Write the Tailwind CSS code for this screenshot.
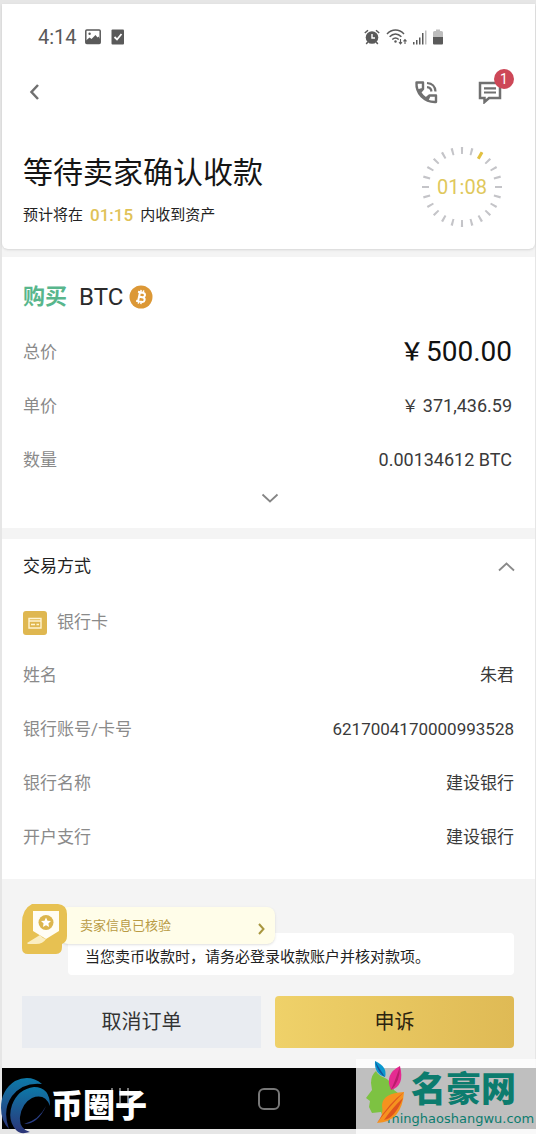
<!DOCTYPE html>
<html lang="zh-CN">

<head>
    <meta charset="UTF-8" />
    <meta name="viewport" content="width=device-width, initial-scale=1.0" />
    <title>等待卖家确认收款</title>
    <script src="https://cdn.jsdelivr.net/npm/@tailwindcss/browser@4"></script>
</head>

<body class="bg-[#e6e6e6] pt-1 pl-0.5 pr-px font-[Roboto,'Noto_Sans_CJK_SC',sans-serif] text-[#3a3a3a]">

    <main class="bg-[#f4f4f4]">
        <!-- Header -->
        <header class="bg-white rounded-b-md shadow-sm pb-5">
            <div class="flex items-center justify-between pt-5 pl-9 pr-[91px] h-[46px] text-[#5a5a5a]">
                <div class="flex items-center gap-2">
                    <span class="text-xl">4:14</span>
                    <svg class="w-4 h-4" viewBox="0 0 16 16" fill="none">
                        <rect x="0.8" y="1" width="14.4" height="13.5" rx="1" stroke="currentColor" stroke-width="1.5" />
                        <circle cx="4.6" cy="4.8" r="1.2" fill="currentColor" />
                        <path d="M1 11.5 4.5 8.5 6.5 10 10.5 6 12.5 8.500 13.5 7.500 15 10v4.500H1z" fill="currentColor" />
                    </svg>
                    <svg class="w-4 h-4 ml-0.5" viewBox="0 0 16 16" fill="none">
                        <rect x="0.5" y="0.500" width="12.500" height="15" rx="1" fill="currentColor" />
                        <path d="M3.500 8 6 10.500 10.500 5" stroke="#fff" stroke-width="1.800" />
                    </svg>
                </div>
                <div class="flex items-center gap-1">
                    <svg class="w-4 h-4" viewBox="0 0 16 16" fill="none" stroke="currentColor">
                        <circle cx="8" cy="8.500" r="6.300" fill="currentColor" stroke="none" />
                        <path d="M8 5v4h3" stroke="#fff" stroke-width="1.400" />
                        <path d="M.8 4 4 1.200M15.200 4 12 1.200M3.800 13 2.200 15M12.200 13l1.600 2" stroke-width="1.500" />
                    </svg>
                    <svg class="w-[22px] h-4 ml-0.5" viewBox="0 0 22 16" fill="none" stroke="currentColor" stroke-width="1.500">
                        <path d="M1 5C6-.2 13-.2 18 5M3.600 7.800c3.600-3.600 8.200-3.600 11.800 0M6.300 10.500c2-2 4.400-2 6.400 0" />
                        <circle cx="9.500" cy="12.500" r="1.200" fill="currentColor" stroke="none" />
                        <path d="M14.500 10v5M13 13.200l1.500 1.800 1.500-1.800M19 15v-4.500M17.500 12.300 19 10.500l1.500 1.800" stroke-width="1.100" />
                    </svg>
                    <svg class="w-4 h-4" viewBox="0 0 16 16" fill="currentColor">
                        <path d="M1 13h1.500v2.500H1zM4 11h1.500v4.500H4zM7 8.500h1.500v7H7zM10 4h1.500v11.500H10z" />
                        <path d="M13 1.500h1.500v14H13z" opacity=".4" />
                    </svg>
                    <svg class="w-3 h-4" viewBox="0 0 12 16" fill="currentColor">
                        <path d="M1 8V3.500Q1 2 2.500 2H4V.5h4V2h1.500Q11 2 11 3.500V8z" opacity=".4" />
                        <path d="M1 8h10v6.500q0 1-1 1H2q-1 0-1-1z" />
                    </svg>
                </div>
            </div>

            <nav class="flex items-center justify-between pl-[26px] pr-[33px] mt-6 h-9 text-[#707070]">
                <button type="button" aria-label="返回">
                    <svg class="w-4 h-4" viewBox="0 0 16 16" fill="none" stroke="currentColor" stroke-width="2.500">
                        <path d="M10 1 3.500 8 10 15" />
                    </svg>
                </button>
                <div class="flex gap-10">
                    <button type="button" aria-label="电话">
                        <svg class="w-6 h-6" viewBox="0 0 24 24" fill="none" stroke="currentColor" stroke-width="2.400" stroke-linejoin="round">
                            <path d="M2.500 2.500H9V9L6 12.500Q8.500 16.500 12 18.500L15.500 15.500H22V22Q13.500 22.500 7.500 16.500 2 10.500 2.500 2.500zM9 9 4.500 10.500M15.500 15.500 13.500 20" />
                            <path d="M13 3q8 .5 8.500 8.500M13 7.200q4 .3 4.500 4.300" stroke-width="2.200" />
                        </svg>
                    </button>
                    <button type="button" aria-label="消息" class="relative">
                        <svg class="w-6 h-6" viewBox="0 0 24 24" fill="none" stroke="currentColor" stroke-width="2.500">
                            <path d="M2 3h20v15H11L6.500 22v-4H2z" />
                            <path d="M6 8.300h12M6 12.500h12" stroke-width="2.200" />
                        </svg>
                        <span class="absolute -top-[11px] -right-3 w-5 h-5 rounded-full bg-[#cd4757] text-white text-sm leading-5">1</span>
                    </button>
                </div>
            </nav>

            <div class="flex items-center justify-between pl-[21px] pr-[31px] mt-[35px]">
                <div>
                    <h1 class="text-[30px] leading-10 mt-2 text-[#151515]">等待卖家确认收款</h1>
                    <p class="flex items-center gap-[7px] mt-2 text-[15px] leading-7 text-[#222]">
                        预计将在 <span class="text-[17px] font-medium leading-7 text-[#e0c257]">01:15</span> 内收到资产
                    </p>
                </div>
                <div class="relative w-[84px] h-[84px] flex items-center justify-center">
                    <svg class="absolute inset-0" viewBox="0 0 84 84" fill="none" stroke-width="7">
                        <circle cx="42" cy="42" r="36.500" stroke="#c4c4c8" pathLength="240" stroke-dasharray="2.200 7.800" stroke-dashoffset="1.100" />
                        <path d="M42 2v7.500" stroke="#e3c13f" stroke-width="3" transform="rotate(30 42 42)" />
                    </svg>
                    <span class="text-xl text-[#dfc85c]">01:08</span>
                </div>
            </div>
        </header>

        <!-- Order -->
        <section class="bg-white mt-2 pt-5 pl-[21px] pr-[19px]">
            <h2 class="flex items-center h-10 text-2xl text-[#2b2b2b]">
                <span class="text-[22px] font-bold text-[#58b68c]">购买</span>
                <span class="ml-3">BTC</span>
                <svg class="w-6 h-6 ml-1.5" viewBox="0 0 24 24">
                    <circle cx="12" cy="12" r="11.500" fill="#dc9836" />
                    <g transform="rotate(12 12 12)" fill="none" stroke="#fff" stroke-width="2">
                        <path d="M8 7.500h4.800q2.700 0 2.700 2.200T12.800 12H10M10 12h3.300q2.900 0 2.900 2.300t-2.900 2.300H8M10 7.500v9" />
                        <path d="M10.700 5v2M13.300 5v2M10.700 17v2M13.300 17v2" stroke-width="1.500" />
                    </g>
                </svg>
            </h2>
            <dl class="text-lg pr-1">
                <div class="flex items-center justify-between h-[54px] mt-2">
                    <dt class="text-[17px] text-[#8a8a8a]">总价</dt>
                    <dd class="flex items-center gap-0.5 text-[28px] text-[#111]"><span class="text-2xl font-medium">￥</span>500.00</dd>
                </div>
                <div class="flex items-center justify-between h-[54px]">
                    <dt class="text-[17px] text-[#8a8a8a]">单价</dt>
                    <dd class="flex items-center gap-1"><span class="text-[17px]">￥</span>371,436.59</dd>
                </div>
                <div class="flex items-center justify-between h-[54px]">
                    <dt class="text-[17px] text-[#8a8a8a]">数量</dt>
                    <dd>0.00134612 BTC</dd>
                </div>
            </dl>
            <button type="button" aria-label="展开" class="flex justify-center w-full pt-0.5 pb-[21px]">
                <svg class="w-[18px] h-[18px]" viewBox="0 0 18 18" fill="none" stroke="#858585" stroke-width="1.800">
                    <path d="M1.500 5.500 9 12.500 16.500 5.500" />
                </svg>
            </button>
        </section>

        <!-- Payment method -->
        <section class="bg-white mt-[11px] pl-[21px] pr-[19px] pb-3.5 text-[17px]">
            <div class="flex items-center justify-between h-14">
                <h2 class="text-[#222]">交易方式</h2>
                <button type="button" aria-label="收起">
                    <svg class="w-[18px] h-[18px]" viewBox="0 0 18 18" fill="none" stroke="#8a8a8a" stroke-width="1.800">
                        <path d="M1 12.500 8.500 5.500 16 12.500" />
                    </svg>
                </button>
            </div>
            <div class="flex items-center gap-2.5 h-[54px] pt-0.5 text-[#8a8a8a]">
                <svg class="w-6 h-6" viewBox="0 0 24 24" fill="none">
                    <rect width="24" height="24" rx="3" fill="#dfb750" />
                    <path d="M6 7.500h12v9.500H6zM6 10h12" stroke="#fff4d0" stroke-width="1.400" />
                    <path d="M8 13.500h4M13.500 13.500H16" stroke="#fff4d0" stroke-width="1.500" />
                </svg>
                银行卡
            </div>
            <dl class="pr-0.5">
                <div class="flex items-center justify-between h-[54px]">
                    <dt class="text-[#8a8a8a]">姓名</dt>
                    <dd>朱君</dd>
                </div>
                <div class="flex items-center justify-between h-[54px]">
                    <dt class="text-[#8a8a8a]">银行账号/卡号</dt>
                    <dd>6217004170000993528</dd>
                </div>
                <div class="flex items-center justify-between h-[54px]">
                    <dt class="text-[#8a8a8a]">银行名称</dt>
                    <dd>建设银行</dd>
                </div>
                <div class="flex items-center justify-between h-[54px]">
                    <dt class="text-[#8a8a8a]">开户支行</dt>
                    <dd>建设银行</dd>
                </div>
            </dl>
        </section>

        <!-- Notice and actions -->
        <section class="pl-5 pr-[21px] pt-[54px] pb-5">
            <div class="relative ml-[46px] bg-white rounded-sm pt-2.5 pb-1 pl-[17px]">
                <p class="text-[15px] leading-7 text-[#222]">当您卖币收款时，请务必登录收款账户并核对款项。</p>
                <a href="#" class="absolute -left-2 -top-[26px] w-[215px] h-[37px] pl-5 pr-2 flex items-center justify-between rounded-lg bg-[#fffde9] shadow text-[13px] text-[#b99b45]">
                    卖家信息已核验
                    <svg class="w-3 h-3 mt-1.5" viewBox="0 0 12 12" fill="none" stroke="#a8963f" stroke-width="2">
                        <path d="M4 1 8.500 6 4 11" />
                    </svg>
                </a>
                <svg class="absolute -left-[46px] -top-[29px] w-[46px] h-[50px]" viewBox="0 0 46 50">
                    <path d="M10 0h26q9 1 9 10v22q0 6-5 8v3q0 7-6 7H6q-6 0-6-6V19Q0 5 10 0z" fill="#e7c152" />
                    <path d="M11 7h26v20l-13 8-13-8z" fill="#fffdf4" />
                    <path d="M5 39 18 31q2 3 6 4-3 5-10 5H6z" fill="#faeec2" />
                    <circle cx="24" cy="18.500" r="7.500" fill="#dcb54d" />
                    <path d="m24 13.500 1.500 3.200 3.500.4-2.600 2.400.7 3.500-3.100-1.700-3.100 1.700.7-3.500-2.600-2.400 3.500-.4z" fill="#fff" />
                </svg>
            </div>
            <div class="grid grid-cols-2 gap-3.5 mt-[21px] text-xl">
                <button type="button" class="h-[52px] bg-[#e9ecf1] text-[#333]">取消订单</button>
                <button type="button" class="h-[52px] rounded-sm bg-linear-to-r from-[#efd169] to-[#dfba55] text-[#2c2410]">申诉</button>
            </div>
        </section>
    </main>

    <!-- Phone navigation bar with the site marks on it -->
    <footer class="relative -mr-px pb-[5px]">
        <div class="grid grid-cols-3 items-center h-[61px] px-2 bg-black">
            <svg class="w-6 h-5 ml-[98px] -mt-1.5" viewBox="0 0 24 20" stroke="#777" stroke-width="2">
                <path d="M4 2v15M12 2v15M20 2v15" />
            </svg>
            <svg class="w-6 h-6 justify-self-center" viewBox="0 0 24 24" fill="none">
                <rect x="2" y="2" width="20" height="20" rx="5" stroke="#777" stroke-width="2" />
            </svg>
        </div>
        <div class="absolute -left-0.5 top-2 flex items-center">
            <svg class="w-[51px] h-[58px] shrink-0" viewBox="0 0 51 58">
                <defs>
                    <linearGradient id="ring" x1="0" y1="0" x2="0" y2="1">
                        <stop offset="0" stop-color="#0d79a8" />
                        <stop offset="1" stop-color="#2c3477" />
                    </linearGradient>
                </defs>
                <path d="M42 8Q30-2 15 5 1 14 1 32 1 45 9 53 2 34 12 20 23 6 42 8z" fill="url(#ring)" />
                <path d="M50 30Q50 11 34 11 18 13 12 29 7 44 16 54 20 59 30 56 19 53 20 41 22 27 32 22 45 17 50 30z" fill="url(#ring)" />
                <path d="M46 30Q39 44 24 48 38 48 46 30z" fill="#2a3f86" />
            </svg>
            <span class="mt-0.5 text-[32px] leading-10 font-black text-white">币圈子</span>
        </div>
        <div class="absolute right-0 bottom-0 w-[180px] h-[75px] bg-white/75 text-[#0c7c6e]">
            <svg class="absolute left-2.5 top-0 w-[42px] h-[66px]" viewBox="0 0 42 66">
                <path d="M10 12Q5 16 5 24L6 31 0 39 4 42 3 48 6 54 15 53 17 58 20 50Q22 40 32 34L28 31Q27 22 17 18 12 16 10 12z" fill="#7dc242" />
                <path d="M9 2Q8 15 19 18 22 8 9 2z" fill="#0a98cf" />
                <path d="M9 2Q13 9 19 18 12 14 9 2z" fill="#14559c" />
                <path d="M34 7Q18 15 25 31 39 27 34 7z" fill="#e52a91" />
                <path d="M34 7Q31 17 25 31 34 23 34 7z" fill="#b81c6b" />
                <path d="M38 33Q17 34 16 46 18 56 11 64 36 63 38 33z" fill="#f5921f" />
                <path d="M38 33Q23 44 11 64 22 49 38 33zM37 39Q27 48 18 61 29 59 37 39z" fill="#df541e" />
            </svg>
            <div class="pt-3 pl-[55px] text-[35px] leading-10 font-black">名豪网</div>
            <div class="pl-[31px] -mt-1 text-[13px] leading-6 font-['DejaVu_Sans',sans-serif]">minghaoshangwu.com</div>
        </div>
    </footer>

</body>

</html>
